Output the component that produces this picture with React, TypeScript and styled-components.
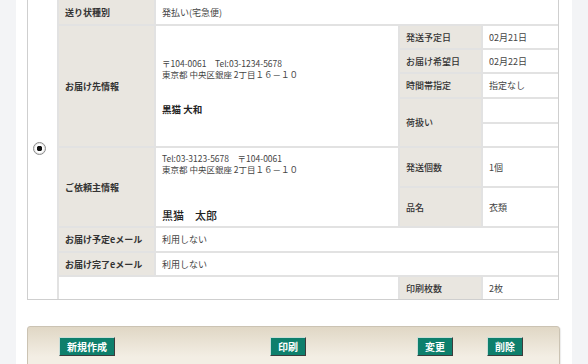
import styled, { createGlobalStyle } from "styled-components";

const GlobalStyle = createGlobalStyle`
  body {
    margin: 0;
    background: #f3f4f6;
    font-family: "Noto Sans CJK JP", "Liberation Sans", sans-serif;
    color: #333;
  }
`;

interface SideRow {
  label: string;
  value: string;
  height: number;
}

const App = () => {
  const senderRows: SideRow[] = [
    { label: "発送個数", value: "1個", height: 40 },
    { label: "品名", value: "衣類", height: 40 },
  ];

  return (
    <>
      <GlobalStyle />
      <Page>
        <DetailTable>
          <colgroup>
            <col style={{ width: 29 }} />
            <col style={{ width: 97 }} />
            <col style={{ width: 244 }} />
            <col style={{ width: 83 }} />
            <col style={{ width: 77 }} />
          </colgroup>
          <tbody>
            <Row $h={24}>
              <RadioCell rowSpan={11}>
                <Radio />
              </RadioCell>
              <Label $first $bold>送り状種別</Label>
              <Value $first colSpan={3}>発払い(宅急便)</Value>
            </Row>
            <Row $h={24}>
              <Label $bold rowSpan={5}>お届け先情報</Label>
              <Value rowSpan={5}>
                <Address>
                  〒104-0061　Tel:03-1234-5678
                  <br />
                  東京都 中央区銀座 2丁目１６－１０
                </Address>
                <Name $bold $gap={24}>黒猫 大和</Name>
              </Value>
              <Label>発送予定日</Label>
              <Value>02月21日</Value>
            </Row>
            <Row $h={24}>
              <Label>お届け希望日</Label>
              <Value>02月22日</Value>
            </Row>
            <Row $h={25}>
              <Label>時間帯指定</Label>
              <Value>指定なし</Value>
            </Row>
            <Row $h={25}>
              <Label rowSpan={2}>荷扱い</Label>
              <Value />
            </Row>
            <Row $h={24}>
              <Value />
            </Row>
            {senderRows.map((row, i) => (
              <Row $h={row.height} key={row.label}>
                {i === 0 && (
                  <>
                    <Label $bold rowSpan={2}>ご依頼主情報</Label>
                    <Value rowSpan={2}>
                      <Address>
                        Tel:03-3123-5678　〒104-0061
                        <br />
                        東京都 中央区銀座 2丁目１６－１０
                      </Address>
                      <Name $big $gap={35}>黒猫　太郎</Name>
                    </Value>
                  </>
                )}
                <Label>{row.label}</Label>
                <Value>{row.value}</Value>
              </Row>
            ))}
            <Row $h={25}>
              <Label $bold>お届け予定eメール</Label>
              <Value colSpan={3}>利用しない</Value>
            </Row>
            <Row $h={24}>
              <Label $bold>お届け完了eメール</Label>
              <Value colSpan={3}>利用しない</Value>
            </Row>
            <Row $h={24}>
              <Value colSpan={2} />
              <Label>印刷枚数</Label>
              <Value>2枚</Value>
            </Row>
          </tbody>
        </DetailTable>

        <ButtonBar>
          <ActionButton $offset={0}>新規作成</ActionButton>
          <ActionButton $offset={155}>印刷</ActionButton>
          <ActionButton $offset={111}>変更</ActionButton>
          <ActionButton $offset={34}>削除</ActionButton>
        </ButtonBar>
      </Page>
    </>
  );
};

const Page = styled.div`
  width: 556px;
  min-height: 364px;
  margin-left: 16px;
  background: #ffffff;
  padding: 0 0 0 11px;
  box-sizing: border-box;
  overflow: hidden;
`;

const DetailTable = styled.table`
  width: 532px;
  table-layout: fixed;
  border-collapse: separate;
  border-spacing: 0;
  border: 1px solid #cfcfcf;
  border-top: none;
  font-size: 9px;
  line-height: 11px;
`;

const Row = styled.tr<{ $h: number }>`
  height: ${(p) => p.$h}px;
`;

const RadioCell = styled.td`
  padding: 0;
  text-align: left;
  vertical-align: middle;
  padding-left: 5px;
  padding-bottom: 3px;
`;

const Radio = styled.span`
  display: block;
  width: 11px;
  height: 11px;
  border: 1px solid #8a8a8a;
  border-radius: 50%;
  background: radial-gradient(circle, #111 0 2.6px, #ffffff 3px);
  box-shadow: inset 0 0 0 1px #e6e6e6;
`;

const Cell = styled.td<{ $first?: boolean }>`
  box-sizing: border-box;
  padding: 0 6px;
  vertical-align: middle;
  border-left: 2px solid #e2e2e2;
  border-top: ${(p) => (p.$first ? "none" : "2px solid #e2e2e2")};
  white-space: nowrap;
`;

const Label = styled(Cell)<{ $bold?: boolean }>`
  background: #e9e6e0;
  font-weight: ${(p) => (p.$bold ? 700 : 500)};
  color: #333;
`;

const Value = styled(Cell)`
  background: #ffffff;
  color: #444;
`;

const Address = styled.div`
  font-size: 8.5px;
  line-height: 11px;
  color: #444;
`;

const Name = styled.div<{ $bold?: boolean; $big?: boolean; $gap: number }>`
  margin-top: ${(p) => p.$gap}px;
  font-size: ${(p) => (p.$big ? "11px" : "9.5px")};
  font-weight: ${(p) => (p.$bold ? 700 : 500)};
  color: #222;
`;

const ButtonBar = styled.div`
  display: flex;
  align-items: flex-start;
  width: 533px;
  height: 50px;
  margin-top: 26px;
  padding: 10px 0 0 31px;
  box-sizing: border-box;
  border: 1px solid #cbc3b3;
  border-radius: 3px 3px 0 0;
  background: linear-gradient(#e0d7c5, #f3eee4 30px);
  box-shadow: 1px 1px 1px rgba(0, 0, 0, 0.08);
`;

const ActionButton = styled.button<{ $offset: number }>`
  margin-left: ${(p) => p.$offset}px;
  height: 19px;
  padding: 0 7px;
  border: 1px solid;
  border-color: #c9ddd8 #3c3c3c #3c3c3c #c9ddd8;
  background: #0e7f6c;
  color: #ffffff;
  font-family: "Noto Sans CJK JP", sans-serif;
  font-size: 10px;
  font-weight: 700;
  line-height: 17px;
  cursor: pointer;
`;

export default App;
